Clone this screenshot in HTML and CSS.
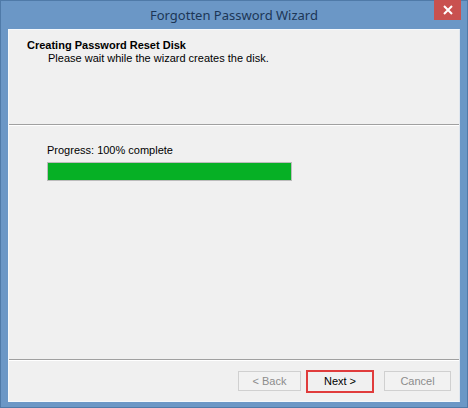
FILE: index.html
```html
<!DOCTYPE html>
<html lang="en">
<head>
  <meta charset="UTF-8" />
  <title>Forgotten Password Wizard</title>
  <link rel="stylesheet" href="styles.css">
</head>
<body>

  <div class="window">
    <div class="titlebar">
      <span class="title">Forgotten Password Wizard</span>
      <button class="close-btn" aria-label="Close">
        <svg width="10" height="10" viewBox="0 0 10 10">
          <path d="M1 1 L9 9 M9 1 L1 9" stroke="#fff" stroke-width="2" />
        </svg>
      </button>
    </div>

    <div class="client">
      <!-- cabeçalho do assistente -->
      <div class="wizard-header">
        <h1>Creating Password Reset Disk</h1>
        <p>Please wait while the wizard creates the disk.</p>
      </div>

      <div class="wizard-body">
        <p class="progress-label">Progress: 100% complete</p>
        <div class="progress">
          <div class="progress-fill" style="width: 100%;"></div>
        </div>
      </div>

      <div class="wizard-footer">
        <button class="btn btn-back" disabled>&lt; Back</button>
        <button class="btn btn-focus">Next &gt;</button>
        <button class="btn btn-cancel" disabled>Cancel</button>
      </div>
    </div>
  </div>

</body>
</html>
```

FILE: styles.css
```css
body {
  margin: 0;
  font-family: "Liberation Sans", Arial, sans-serif;
  font-size: 11px;
  color: #000;
}
.window {
  width: 468px;
  height: 408px;
  box-sizing: border-box;
  background: #6b97c6;
  border: 1px solid #4f7aa8;
  display: flex;
  flex-direction: column;
}
.titlebar {
  position: relative;
  height: 28px;
  display: flex;
  align-items: center;
  justify-content: center;
}
.title {
  font-family: "Noto Sans", sans-serif;
  font-size: 13px;
  color: #1c3656;
  margin-top: -1px;
}
.close-btn {
  position: absolute;
  top: -1px;
  right: 6px;
  width: 27px;
  height: 20px;
  border: none;
  padding: 0;
  background: #c9514f;
  display: flex;
  align-items: center;
  justify-content: center;
}
.client {
  margin: 0 7px;
  height: 371px;
  background: #f0f0f0;
  border: 1px solid #f4f8fc;
  border-right-color: #dfe6ee;
  display: flex;
  flex-direction: column;
}
.wizard-header {
  height: 95px;
  padding: 9px 0 0 18px;
  box-sizing: border-box;
  border-bottom: 1px solid #a0a0a0;
  box-shadow: 0 1px 0 #fff;
}
.wizard-header h1 {
  margin: 0;
  font-size: 11px;
  font-weight: bold;
  line-height: 13px;
}
.wizard-header p {
  margin: 0;
  padding-left: 21px;
  line-height: 13px;
}
.wizard-body {
  flex: 1;
  padding: 18px 0 0 38px;
  border-bottom: 1px solid #a0a0a0;
  box-shadow: 0 1px 0 #fff;
}
.progress-label {
  margin: 0 0 5px;
  line-height: 14px;
}
.progress {
  width: 245px;
  height: 19px;
  box-sizing: border-box;
  border: 1px solid #bcbcbc;
  background: #e6e6e6;
}
.progress-fill {
  height: 100%;
  background: #06b025;
}
.wizard-footer {
  height: 41px;
  display: flex;
  justify-content: flex-end;
  align-items: center;
  padding: 1px 8px 0 0;
  box-sizing: border-box;
}
.btn {
  width: 63px;
  height: 20px;
  box-sizing: border-box;
  border: 1px solid #d0d0d0;
  background: #f2f2f2;
  font-family: "Liberation Sans", Arial, sans-serif;
  font-size: 11px;
  color: #8c8c8c;
  padding: 0;
}
.btn-focus {
  width: 68px;
  height: 23px;
  margin: 0 10px 0 5px;
  border: 2px solid #e03c3c;
  background: #f0f0f0;
  color: #000;
}
.btn-cancel {
  width: 67px;
}
```
